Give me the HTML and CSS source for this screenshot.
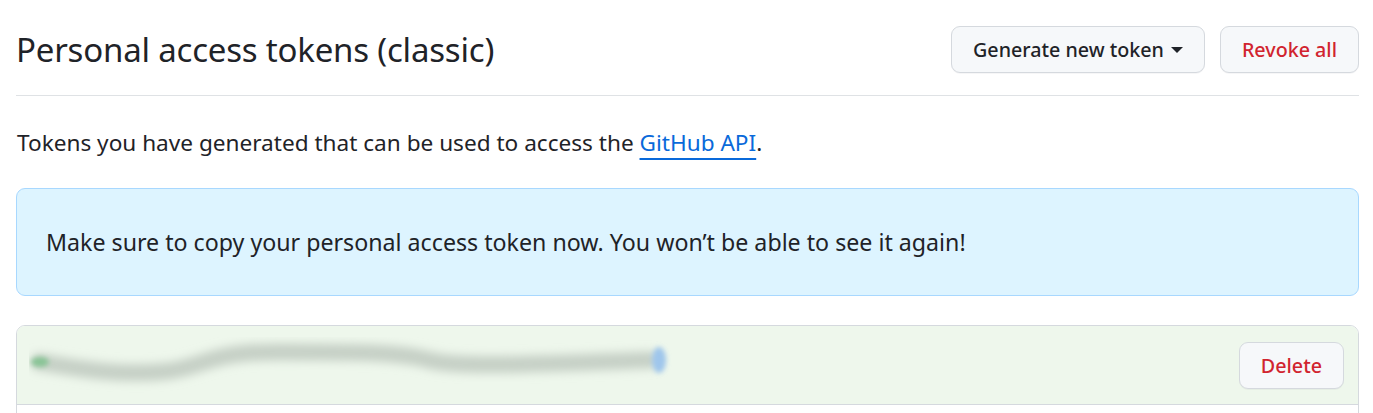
FILE: index.html
```html
<!DOCTYPE html>
<html lang="en">
<head>
<meta charset="utf-8">
<title>Personal access tokens (classic)</title>
<link rel="stylesheet" href="styles.css">
</head>
<body>
<main class="page">
  <header class="subhead">
    <h1 class="subhead-title">Personal access tokens (classic)</h1>
    <div class="subhead-actions">
      <button class="btn" type="button">Generate new token<span class="caret"></span></button>
      <button class="btn btn-danger" type="button">Revoke all</button>
    </div>
  </header>
  <p class="intro">Tokens you have generated that can be used to access the <a class="link" href="#">GitHub API</a>.</p>
  <div class="flash">Make sure to copy your personal access token now. You won’t be able to see it again!</div>
  <div class="token-box">
    <div class="token-row">
      <svg class="token-blur" width="660" height="56" viewBox="0 0 660 56" aria-hidden="true">
        <defs>
          <filter id="b1" x="-10%" y="-100%" width="120%" height="300%"><feGaussianBlur stdDeviation="5"/></filter>
          <filter id="b2" x="-50%" y="-50%" width="200%" height="200%"><feGaussianBlur stdDeviation="2.5"/></filter>
        </defs>
        <path d="M10 25 C 40 30, 90 40, 140 34 C 180 28, 180 15, 250 15 C 330 15, 370 15, 400 23 C 430 31, 500 27, 622 23" fill="none" stroke="#c6d0c6" stroke-width="17" stroke-linecap="round" filter="url(#b1)"/>
        <ellipse cx="11" cy="25" rx="9" ry="5" fill="#88c495" filter="url(#b2)"/>
        <ellipse cx="630" cy="23" rx="7" ry="13" fill="#9fc6ec" filter="url(#b2)"/>
      </svg>
      <button class="btn btn-danger" type="button">Delete</button>
    </div>
    <div class="token-body"></div>
  </div>
</main>
</body>
</html>
```
FILE: styles.css
```css
* { box-sizing: border-box; }
html, body { margin: 0; padding: 0; background: #ffffff; }
body {
  font-family: "Noto Sans", "Open Sans", sans-serif;
  color: #1f2328;
  overflow: hidden;
}
.page {
  width: 1343px;
  margin-left: 16px;
  padding-top: 26px;
}
.subhead {
  display: flex;
  justify-content: space-between;
  align-items: center;
  padding-bottom: 22px;
  border-bottom: 1px solid #dfe2e5;
}
.subhead-title {
  margin: 0;
  font-size: 33px;
  font-weight: 400;
  line-height: 47px;
  letter-spacing: -0.2px;
}
.subhead-actions {
  display: flex;
  gap: 15px;
}
.btn {
  display: inline-flex;
  align-items: center;
  height: 47px;
  padding: 0 21px;
  font-family: inherit;
  font-size: 19.7px;
  font-weight: 500;
  color: #1f2328;
  background: #f6f8fa;
  border: 1px solid #d5d9de;
  border-radius: 9px;
  box-shadow: 0 1px 0 rgba(31,35,40,0.04);
}
.btn-danger { color: #d1242f; }
.caret {
  width: 0;
  height: 0;
  border-left: 6.5px solid transparent;
  border-right: 6.5px solid transparent;
  border-top: 6.5px solid #1f2328;
  margin-left: 7px;
}
.intro {
  margin: 31px 0 0 1px;
  font-size: 22.6px;
  line-height: 32px;
}
.link {
  color: #0969da;
  text-decoration: underline;
  text-decoration-thickness: 2px;
  text-underline-offset: 7px;
}
.flash {
  margin-top: 29px;
  height: 108px;
  display: flex;
  align-items: center;
  padding: 0 29px;
  font-size: 23.2px;
  background: #ddf4ff;
  border: 1px solid #a8d8ff;
  border-radius: 9px;
}
.token-box {
  margin-top: 29px;
  border: 1px solid #d5d9de;
  border-radius: 9px;
  overflow: hidden;
}
.token-row {
  height: 79px;
  display: flex;
  align-items: center;
  justify-content: space-between;
  padding: 0 14px 0 12px;
  background: #eef7ec;
  border-bottom: 1px solid #d5d9de;
}
.token-row .btn { padding: 0 21px; }
.token-blur { display: block; }
.token-body { height: 60px; background: #ffffff; }
```
